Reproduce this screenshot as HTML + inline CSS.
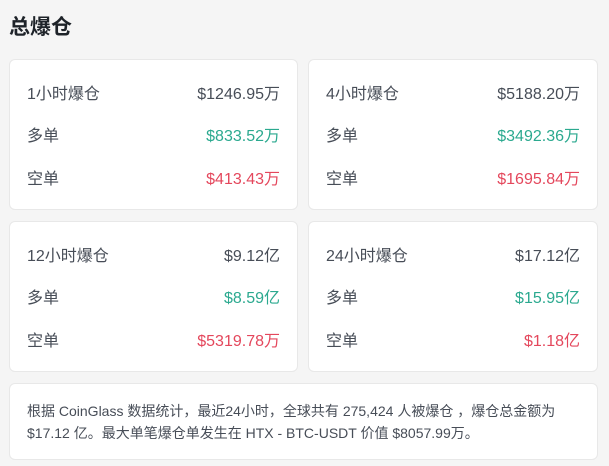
<!DOCTYPE html>
<html><head><meta charset="utf-8"><style>
*{margin:0;padding:0;box-sizing:border-box}
body{width:609px;height:466px;background:#f5f5f5;font-family:"Liberation Sans","Noto Sans CJK SC",sans-serif;position:relative;overflow:hidden}
h1{position:absolute;left:9px;top:11px;font-size:21px;font-weight:bold;color:#1e2329}
.card{position:absolute;background:#fff;border:1px solid #e8e8e8;border-radius:6px}
.row{position:absolute;left:17px;right:17px;display:flex;justify-content:space-between;font-size:16px;color:#474d57;line-height:20px}
.r1{top:25px}.r2{top:67px}.r3{top:110px}
.g{color:#2ba98f}.r{color:#e4475c}.n{color:#474d57}
.note{left:9px;top:383px;width:589px;height:77px;font-size:14px;color:#474d57;line-height:22px;padding:16px 17px;white-space:nowrap}
</style></head><body>
<h1>总爆仓</h1>
<div class="card" style="left:9px;top:59px;width:289px;height:151px">
<div class="row r1"><span>1小时爆仓</span><span class="n">$1246.95万</span></div>
<div class="row r2"><span>多单</span><span class="g">$833.52万</span></div>
<div class="row r3"><span>空单</span><span class="r">$413.43万</span></div></div>
<div class="card" style="left:308px;top:59px;width:290px;height:151px">
<div class="row r1"><span>4小时爆仓</span><span class="n">$5188.20万</span></div>
<div class="row r2"><span>多单</span><span class="g">$3492.36万</span></div>
<div class="row r3"><span>空单</span><span class="r">$1695.84万</span></div></div>
<div class="card" style="left:9px;top:221px;width:289px;height:151px">
<div class="row r1"><span>12小时爆仓</span><span class="n">$9.12亿</span></div>
<div class="row r2"><span>多单</span><span class="g">$8.59亿</span></div>
<div class="row r3"><span>空单</span><span class="r">$5319.78万</span></div></div>
<div class="card" style="left:308px;top:221px;width:290px;height:151px">
<div class="row r1"><span>24小时爆仓</span><span class="n">$17.12亿</span></div>
<div class="row r2"><span>多单</span><span class="g">$15.95亿</span></div>
<div class="row r3"><span>空单</span><span class="r">$1.18亿</span></div></div>
<div class="card note">根据 CoinGlass 数据统计，最近24小时，全球共有 275,424 人被爆仓 ，爆仓总金额为<br>$17.12 亿。最大单笔爆仓单发生在 HTX - BTC-USDT 价值 $8057.99万。</div>
</body></html>
